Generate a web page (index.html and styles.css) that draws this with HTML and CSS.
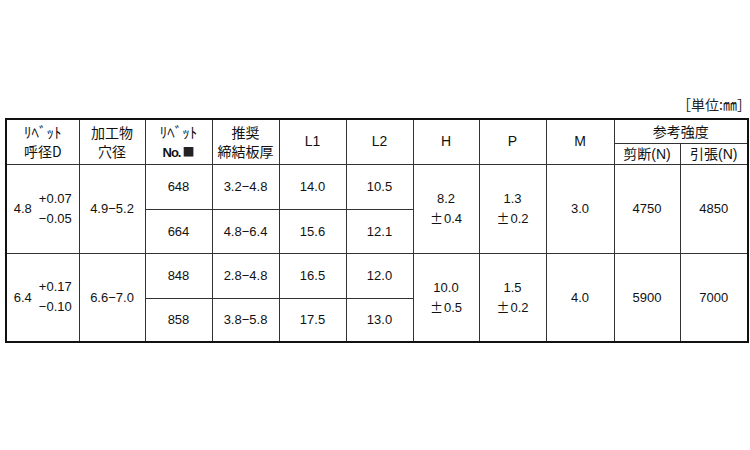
FILE: index.html
```html
<!DOCTYPE html>
<html lang="ja">
<head>
<meta charset="utf-8">
<link rel="stylesheet" href="styles.css">
</head>
<body>
<div class="page">
  <div class="unit">［単位:㎜］</div>
  <table class="spec">
    <colgroup>
      <col class="c1"><col class="c2"><col class="c3"><col class="c4"><col class="c5"><col class="c6"><col class="c7"><col class="c8"><col class="c9"><col class="c10"><col class="c11">
    </colgroup>
    <thead>
      <tr class="ha">
        <th rowspan="2" class="jp"><span class="kana">ﾘﾍﾞｯﾄ</span><br>呼径D</th>
        <th rowspan="2" class="jp">加工物<br>穴径</th>
        <th rowspan="2" class="jp"><span class="kana">ﾘﾍﾞｯﾄ</span><br><span class="no">No.</span><span class="sq">■</span></th>
        <th rowspan="2" class="jp">推奨<br>締結板厚</th>
        <th rowspan="2">L1</th>
        <th rowspan="2">L2</th>
        <th rowspan="2">H</th>
        <th rowspan="2">P</th>
        <th rowspan="2">M</th>
        <th colspan="2" class="jp">参考強度</th>
      </tr>
      <tr class="hb">
        <th class="jp">剪断<span class="lat">(N)</span></th>
        <th class="jp">引張<span class="lat">(N)</span></th>
      </tr>
    </thead>
    <tbody>
      <tr class="r1">
        <td rowspan="2"><div class="tol"><span class="base">4.8</span><span class="pm"><span>+0.07</span><span>−0.05</span></span></div></td>
        <td rowspan="2">4.9−5.2</td>
        <td>648</td>
        <td>3.2−4.8</td>
        <td>14.0</td>
        <td>10.5</td>
        <td rowspan="2" class="two">8.2<br><span class="sg">±</span>0.4</td>
        <td rowspan="2" class="two">1.3<br><span class="sg">±</span>0.2</td>
        <td rowspan="2">3.0</td>
        <td rowspan="2">4750</td>
        <td rowspan="2">4850</td>
      </tr>
      <tr class="r2">
        <td>664</td>
        <td>4.8−6.4</td>
        <td>15.6</td>
        <td>12.1</td>
      </tr>
      <tr class="r1">
        <td rowspan="2"><div class="tol"><span class="base">6.4</span><span class="pm"><span>+0.17</span><span>−0.10</span></span></div></td>
        <td rowspan="2">6.6−7.0</td>
        <td>848</td>
        <td>2.8−4.8</td>
        <td>16.5</td>
        <td>12.0</td>
        <td rowspan="2" class="two">10.0<br><span class="sg">±</span>0.5</td>
        <td rowspan="2" class="two">1.5<br><span class="sg">±</span>0.2</td>
        <td rowspan="2">4.0</td>
        <td rowspan="2">5900</td>
        <td rowspan="2">7000</td>
      </tr>
      <tr class="r2">
        <td>858</td>
        <td>3.8−5.8</td>
        <td>17.5</td>
        <td>13.0</td>
      </tr>
    </tbody>
  </table>
</div>
</body>
</html>
```

FILE: styles.css
```css
html, body {
  margin: 0;
  padding: 0;
  background: #fff;
}
body {
  font-family: "Liberation Sans", "Noto Sans CJK JP", sans-serif;
  color: #111;
}
.page {
  padding: 95px 3px 0 5px;
}
.unit {
  text-align: right;
  font-size: 14px;
  line-height: 18px;
  height: 23px;
  margin-right: -4px;
  font-family: "Noto Sans CJK JP", sans-serif;
  color: #222;
}
.spec {
  border-collapse: collapse;
  table-layout: fixed;
  width: 742px;
  border: 2px solid #111;
}
.c1 { width: 73px; }
.c2, .c7, .c10 { width: 66px; }
.c3, .c4, .c5, .c6, .c8 { width: 67px; }
.c9, .c11 { width: 68px; }
.spec th, .spec td {
  border: 1px solid #333;
  padding: 0;
  text-align: center;
  vertical-align: middle;
  font-size: 13px;
  line-height: 19px;
  font-weight: normal;
}
.spec th {
  font-size: 14px;
}
.spec th.jp {
  font-family: "Noto Sans CJK JP", sans-serif;
  font-size: 14px;
}
.kana {
  font-size: 15px;
}
.lat {
  font-family: "Liberation Sans", sans-serif;
}
.no {
  font-family: "Liberation Sans", sans-serif;
  font-weight: bold;
  font-size: 13px;
  letter-spacing: -1px;
}
.sq {
  font-size: 12px;
  margin-left: 2px;
  color: #222;
}
.sg {
  font-family: "Noto Sans CJK JP", sans-serif;
  display: inline-block;
  width: 13px;
  text-align: center;
  margin-right: 1px;
}
.ha { height: 24px; }
.hb { height: 21px; }
.r1 { height: 45px; }
.r2 { height: 44px; }
.two { line-height: 21px; }
.tol {
  display: flex;
  align-items: center;
  justify-content: center;
  gap: 7px;
}
.pm {
  display: flex;
  flex-direction: column;
  line-height: 20px;
  text-align: left;
}
```
